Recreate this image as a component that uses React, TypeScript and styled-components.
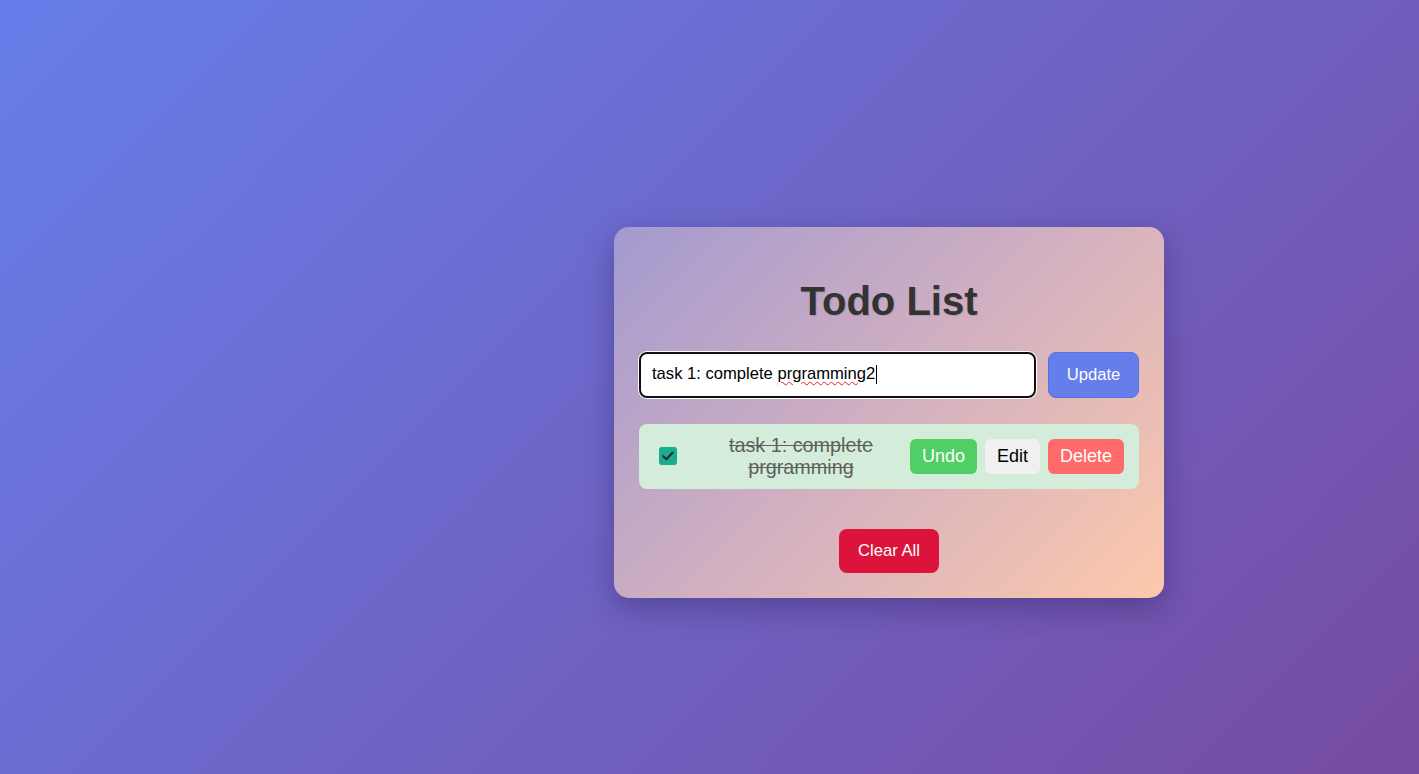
import React from "react";
import styled, { createGlobalStyle } from "styled-components";

const GlobalStyle = createGlobalStyle`
  html, body { margin: 0; padding: 0; }
  body {
    font-family: "Liberation Sans", Arial, sans-serif;
    background: linear-gradient(135deg, #667eea 0%, #764ba2 100%);
    min-height: 100vh;
  }
  * { box-sizing: border-box; }
`;

const Page = styled.div`
  min-height: 100vh;
  display: flex;
  align-items: center;
  justify-content: center;
  padding: 51px 0 0 359px;
`;

const Card = styled.div`
  width: 550px;
  padding: 25px;
  border-radius: 15px;
  background: linear-gradient(135deg, #a39ad0 0%, #d2b0c0 50%, #fdc9ac 100%);
  box-shadow: 0 10px 30px rgba(20, 10, 60, 0.3);
  display: flex;
  flex-direction: column;
`;

const Title = styled.h1`
  margin: 27px 0 27.8px;
  font-size: 40px;
  font-weight: 700;
  text-align: center;
  color: #333;
  text-shadow: 1px 1px 1px rgba(0, 0, 0, 0.12);
`;

const Form = styled.div`
  display: flex;
  gap: 12px;
  margin-bottom: 26px;
`;

const InputWrap = styled.div`
  position: relative;
  flex: 1;
  display: flex;
`;

const TextInput = styled.input`
  flex: 1;
  height: 46px;
  padding: 0 11px 1px;
  font-family: "Liberation Sans", Arial, sans-serif;
  font-size: 16.6px;
  color: #000;
  background: #fff;
  border: 2px solid #101010;
  border-radius: 8px;
  box-shadow: 0 0 0 1px #fff;
  outline: none;
`;

const Mirror = styled.div`
  position: absolute;
  left: 13px;
  top: 0;
  bottom: 1px;
  display: flex;
  align-items: center;
  font-size: 16.6px;
  color: transparent;
  white-space: pre;
  pointer-events: none;
`;

const Misspelled = styled.span`
  text-decoration: underline wavy #e02020;
  text-decoration-thickness: 1px;
  text-underline-offset: 2px;
`;

const Caret = styled.span`
  display: inline-block;
  width: 1px;
  height: 19px;
  margin-left: 1px;
  background: #000;
`;

const Button = styled.button<{ $bg: string; $fg: string; $border?: string }>`
  font-family: "Liberation Sans", Arial, sans-serif;
  background: ${(p) => p.$bg};
  color: ${(p) => p.$fg};
  border: ${(p) => (p.$border ? `1px solid ${p.$border}` : "none")};
  cursor: pointer;
`;

const UpdateButton = styled(Button)`
  width: 91px;
  height: 46px;
  font-size: 16.6px;
  border-radius: 8px;
`;

const List = styled.ul`
  list-style: none;
  margin: 0 0 40px;
  padding: 0;
`;

const Item = styled.li`
  display: flex;
  align-items: center;
  padding: 10px 15px;
  min-height: 65px;
  background: #d4edda;
  border-radius: 8px;
`;

const CheckBox = styled.span`
  width: 18px;
  height: 18px;
  margin-left: 5px;
  border-radius: 3px;
  background: #1aad8d;
  display: flex;
  align-items: center;
  justify-content: center;
  flex-shrink: 0;
`;

const ItemText = styled.span`
  flex: 1;
  margin: 0 0 0 15px;
  text-align: center;
  font-size: 19.8px;
  line-height: 22.6px;
  color: #5f5f5f;
  text-decoration: line-through;
`;

const Actions = styled.div`
  display: flex;
  gap: 8px;
`;

const SmallButton = styled(Button)`
  height: 35px;
  padding: 0 12px;
  font-size: 18px;
  border-radius: 6px;
`;

const ClearButton = styled(Button)`
  align-self: center;
  width: 100px;
  height: 44px;
  font-size: 16.6px;
  border-radius: 8px;
`;

export default function App() {
  return (
    <>
      <GlobalStyle />
      <Page>
        <Card>
          <Title>Todo List</Title>
          <Form>
            <InputWrap>
              <TextInput
                type="text"
                defaultValue="task 1: complete prgramming2"
                spellCheck={false}
              />
              <Mirror aria-hidden>
                {"task 1: complete "}
                <Misspelled>prgramming</Misspelled>
                {"2"}
                <Caret />
              </Mirror>
            </InputWrap>
            <UpdateButton $bg="#667eea" $fg="#fff" $border="#4f74e6">
              Update
            </UpdateButton>
          </Form>
          <List>
            <Item>
              <CheckBox role="checkbox" aria-checked="true">
                <svg width="12" height="10" viewBox="0 0 12 10">
                  <path
                    d="M1.3 5.2 L4.4 8.2 L10.7 1.6"
                    fill="none"
                    stroke="#2b2b35"
                    strokeWidth="2.2"
                    strokeLinecap="round"
                    strokeLinejoin="round"
                  />
                </svg>
              </CheckBox>
              <ItemText>task 1: complete prgramming</ItemText>
              <Actions>
                <SmallButton $bg="#51cf66" $fg="#fff">Undo</SmallButton>
                <SmallButton $bg="#f0f0f0" $fg="#000">Edit</SmallButton>
                <SmallButton $bg="#ff6b6b" $fg="#fff">Delete</SmallButton>
              </Actions>
            </Item>
          </List>
          <ClearButton $bg="#dc143c" $fg="#fff">Clear All</ClearButton>
        </Card>
      </Page>
    </>
  );
}
